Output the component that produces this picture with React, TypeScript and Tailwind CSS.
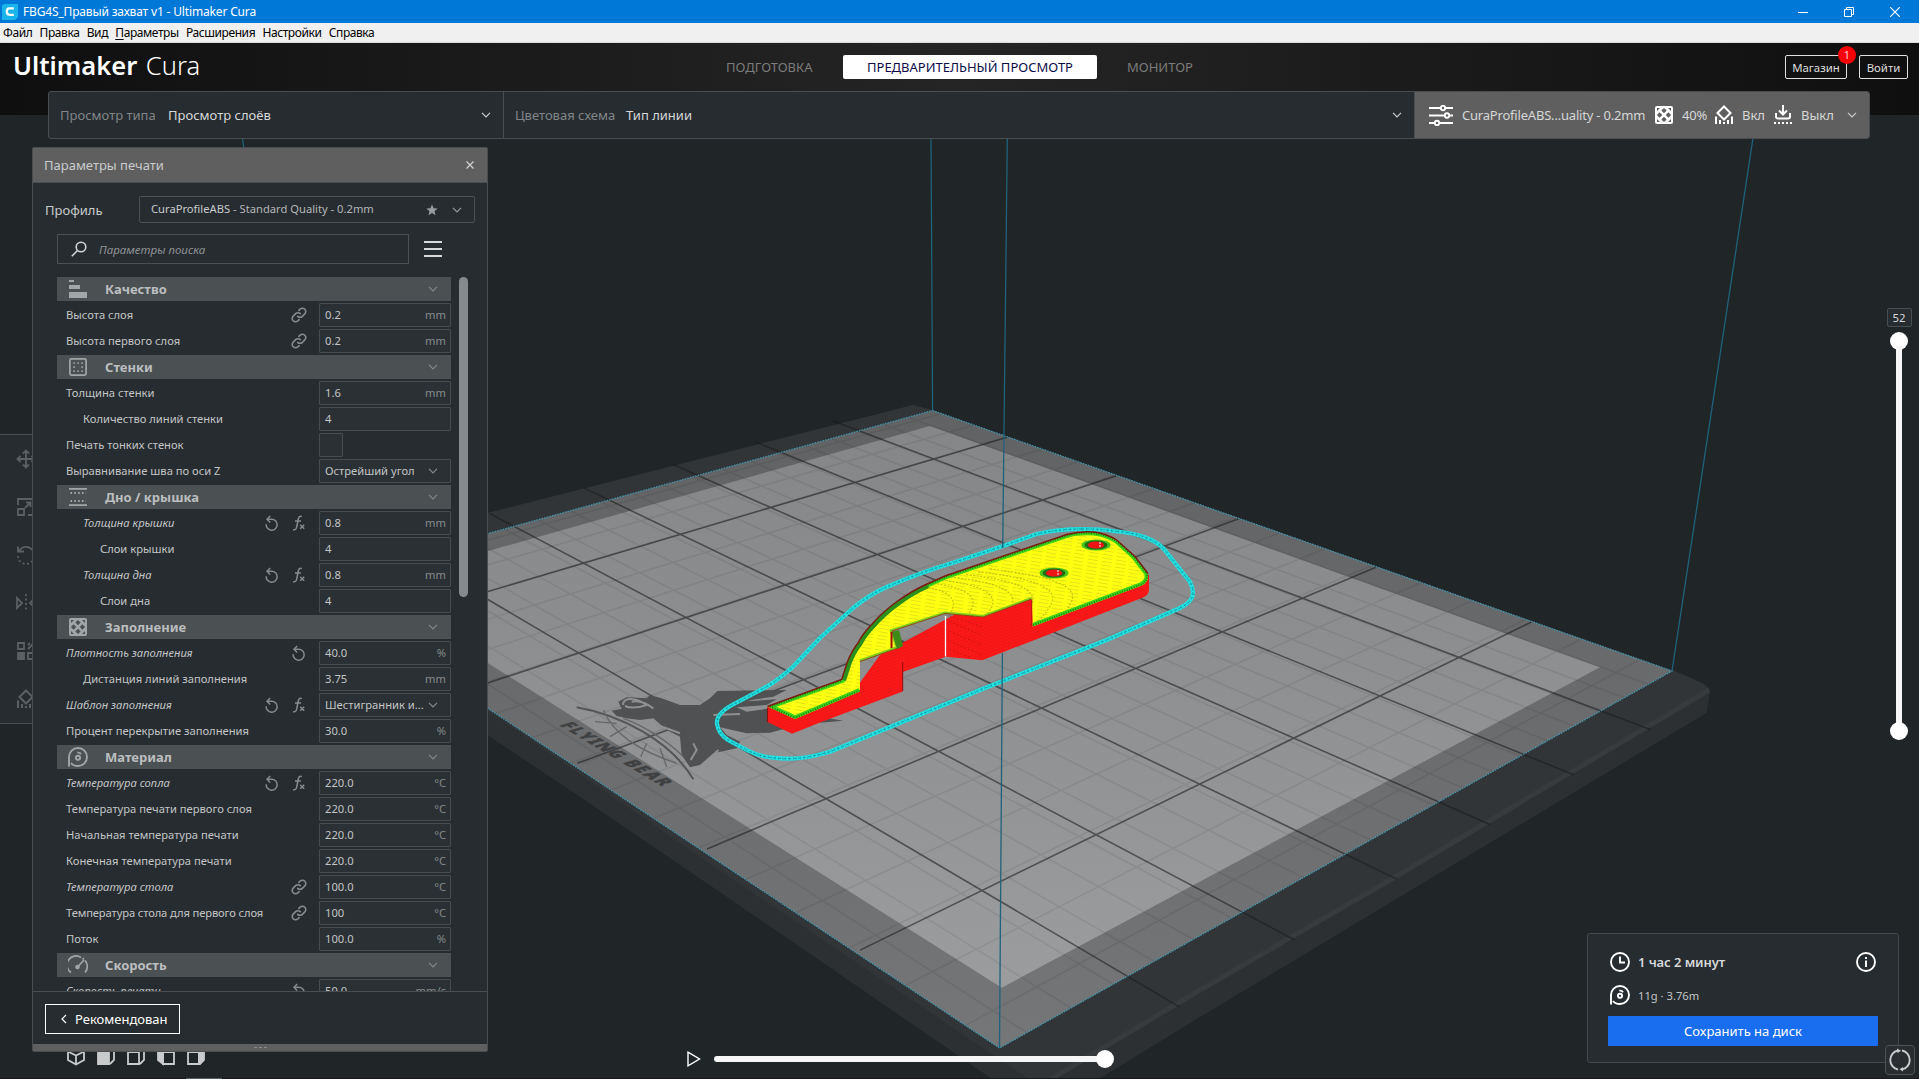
import React from "react";

type P = [number, number];

/* ---------- build plate projection ---------- */

const CORNERS: { b: P; r: P; l: P } = {
  b: [932.6, 410.5],
  r: [1672, 671],
  l: [302, 585],
};

function project(u: number, v: number): P {
  const { b, r, l } = CORNERS;
  const g = -0.2797;
  const h = -0.2096;
  const w = 1 + g * u + h * v;
  const ax = r[0] - b[0] + g * r[0];
  const ay = r[1] - b[1] + g * r[1];
  const cx = l[0] - b[0] + h * l[0];
  const cy = l[1] - b[1] + h * l[1];
  return [(ax * u + cx * v + b[0]) / w, (ay * u + cy * v + b[1]) / w];
}

function seg(u1: number, v1: number, u2: number, v2: number) {
  const a = project(u1, v1);
  const c = project(u2, v2);
  return `M${a[0].toFixed(1)} ${a[1].toFixed(1)}L${c[0].toFixed(1)} ${c[1].toFixed(1)}`;
}

const minorLines: string[] = [];
for (let k = -8; k <= 8; k++) minorLines.push(seg(0.492 + k * 0.0595, 0, 0.492 + k * 0.0595, 1));
for (let k = 1; k <= 20; k++) minorLines.push(seg(0, k / 20.6, 1, k / 20.6));

const majorLines: string[] = [];
for (let k = 1; k <= 6; k++) majorLines.push(seg(-0.05, k / 7, 1.047, k / 7));
[0.136, 0.316, 0.496, 0.676, 0.856].forEach((u) => majorLines.push(seg(u, 0, u, 0.995)));

const TOP_FACE =
  "M767.5 706.5L841.7 679.5L847 663C850 655 854 648 858 643C862 635 867 629 873 623C880 615 888 608 897 601.5C906 595 916 589 927 584L945 576L1001.7 556.5L1066.7 534.5C1072 532.5 1077 532 1081.7 532C1088 531.5 1095 532 1100 533C1107 535 1112 537 1116.7 540L1135 556.5L1148 573.5L1148 578C1147 582 1145 584 1141.7 585.5L1032.7 626.5L1031.7 599L983 617L945 613.5L892 631L898 648L860 661.5L860 691.5L795 719Z";
const OUTER_EDGE =
  "M860 691.5L795 719L767.5 706.5L841.7 679.5L847 663C850 655 854 648 858 643C862 635 867 629 873 623C880 615 888 608 897 601.5C906 595 916 589 927 584L945 576L1001.7 556.5L1066.7 534.5C1072 532.5 1077 532 1081.7 532C1088 531.5 1095 532 1100 533C1107 535 1112 537 1116.7 540L1135 556.5L1148 573.5L1148 578C1147 582 1145 584 1141.7 585.5L1032.7 626.5";
const WALL_EDGE = "M860 661.5L898 648L892 631L945 613.5L983 617L1031.7 599";
const BODY =
  "M767.5 706.5L767.5 722L792 733.8L820 722.5L902.7 691.5L902.7 672L945.7 656.7L982.3 660.3L1143 597.5C1147 596 1149 593 1149 589L1149 575L1100 545L1000 590L880 655L856 688L800 703Z";
const SKIRT =
  "M1081.7 529C1065 529 1050 531 1036.7 534L1001.7 546.5L953 562.7C925 571 905 579 886.7 587C875 592 863 600 853 608L820 638L793 666.7C785 674 776 681 766.7 686.7L732 705C723 710 716 716 717 724C718 731 722 736 728 740L746.7 750C756 755 765 757 773 757.7C783 759 792 759 800 758C811 757 822 754 830 751.7L980 690L1106.7 640L1180 608C1190 603 1193 598 1193 593C1193 589 1192 586 1190 582L1163 548C1158 543 1152 540 1146.7 538C1135 533 1125 532 1113 531C1102 529 1092 529 1081.7 529Z";

function Scene() {
  return (
    <svg className="absolute inset-0" width="1919" height="1036" viewBox="0 43 1919 1036">
      <defs>
        <linearGradient id="plate" x1="0" y1="400" x2="0" y2="1050" gradientUnits="userSpaceOnUse">
          <stop offset="0" stopColor="#848586" />
          <stop offset="0.45" stopColor="#8f9091" />
          <stop offset="1" stopColor="#9e9fa0" />
        </linearGradient>
        <linearGradient id="rim" x1="0" y1="400" x2="0" y2="1050" gradientUnits="userSpaceOnUse">
          <stop offset="0" stopColor="#616263" />
          <stop offset="1" stopColor="#757677" />
        </linearGradient>
        <pattern id="skin" width="14" height="3.6" patternUnits="userSpaceOnUse" patternTransform="rotate(9)">
          <rect width="14" height="3.6" fill="#ffff12" />
          <rect y="0" width="10" height="0.7" fill="#dcd814" />
        </pattern>
        <pattern id="wall" width="4" height="3" patternUnits="userSpaceOnUse" patternTransform="rotate(-20)">
          <rect width="4" height="3" fill="#fa1818" />
          <rect width="4" height="0.6" fill="#ee1414" />
        </pattern>
        <clipPath id="topClip">
          <path d={TOP_FACE} />
        </clipPath>
      </defs>

      {/* platform body */}
      <path d="M302 573L913 405L932 410L1672 670L1701.5 682.7C1707 685 1710 687 1710 692L1706.5 713L1428 880L1200 1017L1099 1079L992 1079L790 940L570 790L240 570Z" fill="#2d3032" />
      <path d="M302 560L913 405L932 410L1672 670L1701.5 682.7L1709 690L1390 880L1200 990L1051 1079L1029 1079L700 857L487 710Z" fill="#323537" />
      <path d="M1709 690L1390 880L1200 990L1051 1079" fill="none" stroke="#383b3d" strokeWidth="5" />

      {/* printable plate */}
      <path d="M932.6 410.5L1672 671L999.5 1048L302 585Z" fill="url(#rim)" />
      <path d="M930 426L1600 667.3L1001.8 987.7L365.5 585.7Z" fill="url(#plate)" />
      <path d={minorLines.join("")} stroke="#000" strokeOpacity="0.07" strokeWidth="1.6" fill="none" />
      <path d={majorLines.join("")} stroke="#1a1c1e" strokeOpacity="0.58" strokeWidth="1.6" fill="none" />

      {/* printer maker's mascot */}
      <g transform="translate(480 390) scale(0.33333)">
        <path d="M395 962L425 956L415 935L440 922L500 925L510 915L545 925L600 945L660 945L690 925L712 903L920 900L880 920L780 935L890 928L860 945L770 952L800 965L870 955L1090 992L1000 1000L900 1020L870 1028L800 1030L720 1012L740 1035L780 1055L770 1075L700 1090L660 1125L630 1132L605 1095L600 1040L560 1020L520 985L480 990L440 985L410 978Z" fill="#505152" />
        <path d="M430 945C425 925 460 918 500 945C470 955 450 955 435 948M455 935C480 930 500 940 520 955M640 1060L650 1080L632 1110M700 975L780 972M700 1095L715 1080M530 1005C560 1015 590 1025 600 1030" fill="none" stroke="#8f9091" strokeWidth="6" />
        <path d="M290 952C420 975 570 1050 640 1168" fill="none" stroke="#555657" strokeWidth="6" />
        <path d="M345 995L410 1000M370 960C400 1030 470 1080 590 1120M440 1010L390 1040M500 1060L482 1100M540 1075L560 1130M310 1120L355 1103M430 985C500 1010 570 1060 610 1100" fill="none" stroke="#666768" strokeWidth="4" />
      </g>
      <text transform="matrix(0.9 0.535 -1.15 0.35 559 725)" fontFamily="'Noto Sans', sans-serif" fontWeight="800" fontSize="15" fill="#3f4041" stroke="#3f4041" strokeWidth="0.6" textLength="114">
        FLYING BEAR
      </text>

      {/* build volume */}
      <path d="M932.6 410.5L1672 671L999.5 1048L302 585Z" fill="none" stroke="#3f98b3" strokeWidth="1.3" strokeDasharray="1.5 1.2" />
      <path d="M931 138L932.6 410.5M1753 138L1672 671M242.5 138L302 585" stroke="#1f627c" strokeWidth="1.3" fill="none" />

      {/* sliced model */}
      <path d={SKIRT} fill="none" stroke="#23e3e4" strokeWidth="4.2" />
      <path d={SKIRT} fill="none" stroke="#128f93" strokeWidth="0.8" strokeDasharray="3 2" />
      <path d={SKIRT} fill="none" stroke="#176f72" strokeOpacity="0.45" strokeWidth="4.2" strokeDasharray="0.5 3.1" />
      <path d={BODY} fill="url(#wall)" />
      <path d={TOP_FACE} fill="url(#skin)" />
      <g clipPath="url(#topClip)">
        {[30, 50, 70, 90, 110, 130, 150].map((r) => (
          <path
            key={r}
            d={`M${900 + r * 0.6} ${590 - r * 0.14}Q${930 + r} ${594 - r * 0.1} ${922 + r} ${612 - r * 0.08}T${880 + r} ${640}`}
            fill="none"
            stroke="#c9c414"
            strokeWidth="1.3"
            strokeDasharray="2 1.5"
          />
        ))}
        <path d={OUTER_EDGE} fill="none" stroke="#3cd41a" strokeWidth="7" />
        <path d={OUTER_EDGE} fill="none" stroke="#1b7a12" strokeWidth="4" strokeDasharray="1 1.5" />
        <path d="M841.7 679.5L847 663C850 655 854 648 858 643C862 635 867 629 873 623C880 615 888 608 897 601.5C906 595 916 589 927 584" fill="none" stroke="#2a8f1c" strokeWidth="9" />
        <path d={WALL_EDGE} fill="none" stroke="#7ccf1c" strokeWidth="4" />
      </g>
      <path d="M767.5 706.5L841.7 679.5L847 663C850 655 854 648 858 643C862 635 867 629 873 623C880 615 888 608 897 601.5C906 595 916 589 927 584L945 576L1066.7 534.5C1077 532 1090 531 1100 533C1107 535 1112 537 1116.7 540L1135 556.5L1148 573.5" fill="none" stroke="#7c1a10" strokeWidth="1.4" />
      <path d={WALL_EDGE} fill="none" stroke="#8a3a10" strokeWidth="0.9" />
      <path d="M892 632L899 630L903 646L897 649Z" fill="#3c8a18" />
      <path d="M891.5 632V648" stroke="#a01010" strokeWidth="2" />
      <path d="M902.7 662L902.7 691M767.5 708V722" stroke="#8a0f0f" strokeWidth="1" />
      <path d="M1031.7 600V626" stroke="#c01212" strokeWidth="1" />
      <path d="M946 620L982 635M946 630L982 645M946 640L982 655M950 616L982 627M946 648L970 657" stroke="#b01010" strokeWidth="1" strokeDasharray="1 3" />
      <path d="M945.5 616V656.5" stroke="#fff" strokeWidth="1.3" />
      {[
        [1096, 545],
        [1054, 573],
      ].map(([x, y]) => (
        <g key={x}>
          <ellipse cx={x} cy={y} rx="14.5" ry="5.6" fill="#49c51c" />
          <ellipse cx={x} cy={y} rx="11.5" ry="4.6" fill="#1f6d14" />
          <ellipse cx={x} cy={y} rx="8.2" ry="3.6" fill="#ee1515" />
          <path d={`M${x + 4} ${y - 3}V${y + 3}`} stroke="#fff" strokeDasharray="2 1" />
        </g>
      ))}
      <path d="M1007.3 138L1002.7 548" stroke="#1f627c" strokeWidth="1.3" />
      <path d="M1002.4 653L999.5 1048" stroke="#1f627c" strokeWidth="1.3" />
    </svg>
  );
}

/* ---------- icons ---------- */

type IconProps = { className?: string };

function Chevron({ className = "" }: IconProps) {
  return (
    <svg className={className} width="10" height="6" viewBox="0 0 10 6" fill="none" stroke="currentColor" strokeWidth="1.2">
      <path d="M1 0.8L5 4.8L9 0.8" />
    </svg>
  );
}

function LinkIcon() {
  return (
    <svg width="16" height="16" viewBox="0 0 24 24" fill="none" stroke="currentColor" strokeWidth="2.4" strokeLinecap="round">
      <path d="M10 14a5 5 0 0 0 7.1 0l3.6-3.6a5 5 0 0 0-7.1-7.1L11.800 5" />
      <path d="M14 10a5 5 0 0 0-7.100 0l-3.600 3.600a5 5 0 0 0 7.100 7.100L12.200 19" />
    </svg>
  );
}

function ResetIcon() {
  return (
    <svg width="14" height="16" viewBox="0 0 14 16" fill="none" stroke="currentColor" strokeWidth="1.5">
      <path d="M1.200 9.200A5.500 5.500 0 1 0 6.500 4.200H2.300" />
      <path d="M5.200 0.900L2 4.200L5.200 7.500" />
    </svg>
  );
}

function FxIcon() {
  return (
    <svg width="14" height="16" viewBox="0 0 14 16" fill="none" stroke="currentColor" strokeWidth="1.5">
      <path d="M9.800 1.600C7.800 0.600 6.700 1.800 6.300 4L4.800 11.500C4.400 14 3.200 15.300 1 14.600M3 6H9" />
      <path d="M8.200 9.800L12.200 13.800M12.200 9.800L8.200 13.800" />
    </svg>
  );
}

function InfillIcon({ className = "", hole = "#4b5053" }: IconProps & { hole?: string }) {
  return (
    <svg className={className} width="18" height="18" viewBox="0 0 18 18">
      <rect width="18" height="18" rx="2" fill="currentColor" />
      <g fill={hole}>
        {[
          [9, 4.6],
          [4.6, 9],
          [13.4, 9],
          [9, 13.4],
        ].map(([x, y]) => (
          <path key={`${x}-${y}`} d={`M${x} ${y - 2.7}L${x + 2.7} ${y}L${x} ${y + 2.7}L${x - 2.7} ${y}Z`} />
        ))}
        <path d="M2 2H5L2 5ZM16 2V5L13 2ZM2 16V13L5 16ZM16 16H13L16 13Z" />
      </g>
    </svg>
  );
}

function SpoolIcon({ className = "" }: IconProps) {
  return (
    <svg className={className} width="20" height="20" viewBox="0 0 20 20" fill="none" stroke="currentColor" strokeWidth="1.9">
      <path d="M1 19.500V10A9 9 0 1 1 10 19C7 19 4.500 18 3 16" />
      <circle cx="10" cy="10.800" r="2.100" />
      <path d="M9.300 5.700C11 5.300 12.300 6 13 7.300" strokeWidth="1.800" />
    </svg>
  );
}

function SupportIcon({ className = "" }: IconProps) {
  return (
    <svg className={className} width="18" height="20" viewBox="0 0 18 20" fill="none" stroke="currentColor" strokeWidth="2">
      <path d="M9 1.500L15.500 8L9 14.500L2.500 8Z" />
      <path d="M1 11.500V19M5 15V19M9 17V19M13 15V19M17 11.500V19" />
    </svg>
  );
}

function AdhesionIcon() {
  return (
    <svg width="18" height="20" viewBox="0 0 18 20" fill="none" stroke="currentColor" strokeWidth="2">
      <path d="M9 0V9M5 5.500L9 9.500L13 5.500" />
      <path d="M2 8V11.500Q2 13.500 4 13.500H14Q16 13.500 16 11.500V8" />
      <path d="M0 18H18" strokeDasharray="2 2" />
    </svg>
  );
}

function SlidersIcon() {
  return (
    <svg width="24" height="21" viewBox="0 0 24 21" fill="none" stroke="currentColor" strokeWidth="1.9">
      <path d="M0 3H11.500M16.500 3H24M0 10.500H15.500M20.500 10.500H24M0 18H5.500M10.500 18H24" />
      <circle cx="14" cy="3" r="2.200" />
      <circle cx="18" cy="10.500" r="2.200" />
      <circle cx="8" cy="18" r="2.200" />
    </svg>
  );
}

function CategoryIcon({ kind }: { kind: string }) {
  switch (kind) {
    case "quality":
      return (
        <svg width="20" height="20" viewBox="0 0 20 20" fill="currentColor">
          <path d="M1 1H6V3H1ZM1 6H12V10H1ZM1 13H19V19H1Z" />
        </svg>
      );
    case "walls":
      return (
        <svg width="20" height="20" viewBox="0 0 20 20" fill="none" stroke="currentColor" strokeWidth="1.7">
          <rect x="1.900" y="1.900" width="16.200" height="16.200" rx="1.500" />
          <g fill="currentColor" stroke="none">
            {[5.3, 9.3, 13.3].map((x) =>
              [5.3, 9.3, 13.3].map((y) => (x === 9.3 && y === 9.3 ? null : <rect key={`${x}${y}`} x={x} y={y} width="1.600" height="1.600" />))
            )}
          </g>
        </svg>
      );
    case "topbottom":
      return (
        <svg width="20" height="20" viewBox="0 0 20 20" fill="none" stroke="currentColor" strokeWidth="1.8">
          <path d="M1 1.900H19M1 18.100H19" />
          <path d="M2.500 6H18M2.500 14H18" strokeDasharray="1.600 2.200" />
        </svg>
      );
    case "infill":
      return <InfillIcon className="mr-px ml-px" />;
    case "material":
      return <SpoolIcon />;
    default:
      return (
        <svg width="20" height="20" viewBox="0 0 20 20" fill="none" stroke="currentColor" strokeWidth="1.7">
          <path d="M3 17.500A9 9 0 0 1 13 2.500M17 5.500A9 9 0 0 1 17 17.500M14.500 3.200L16 4.300" />
          <path d="M10 11.500L16 5" />
          <circle cx="9.500" cy="12" r="1.400" fill="currentColor" />
        </svg>
      );
  }
}

/* ---------- settings list ---------- */

type Item =
  | { t: "cat"; icon: string; label: string }
  | {
      t: "row";
      label: string;
      indent?: 0 | 1 | 2;
      changed?: boolean;
      marks?: string;
      value?: string;
      unit?: string;
      control?: "check" | "select";
    };

const ITEMS: Item[] = [
  { t: "cat", icon: "quality", label: "Качество" },
  { t: "row", label: "Высота слоя", marks: "l", value: "0.2", unit: "mm" },
  { t: "row", label: "Высота первого слоя", marks: "l", value: "0.2", unit: "mm" },
  { t: "cat", icon: "walls", label: "Стенки" },
  { t: "row", label: "Толщина стенки", value: "1.6", unit: "mm" },
  { t: "row", label: "Количество линий стенки", indent: 1, value: "4" },
  { t: "row", label: "Печать тонких стенок", control: "check" },
  { t: "row", label: "Выравнивание шва по оси Z", control: "select", value: "Острейший угол" },
  { t: "cat", icon: "topbottom", label: "Дно / крышка" },
  { t: "row", label: "Толщина крышки", indent: 1, changed: true, marks: "rf", value: "0.8", unit: "mm" },
  { t: "row", label: "Слои крышки", indent: 2, value: "4" },
  { t: "row", label: "Толщина дна", indent: 1, changed: true, marks: "rf", value: "0.8", unit: "mm" },
  { t: "row", label: "Слои дна", indent: 2, value: "4" },
  { t: "cat", icon: "infill", label: "Заполнение" },
  { t: "row", label: "Плотность заполнения", changed: true, marks: "r", value: "40.0", unit: "%" },
  { t: "row", label: "Дистанция линий заполнения", indent: 1, value: "3.75", unit: "mm" },
  { t: "row", label: "Шаблон заполнения", changed: true, marks: "rf", control: "select", value: "Шестигранник и..." },
  { t: "row", label: "Процент перекрытие заполнения", value: "30.0", unit: "%" },
  { t: "cat", icon: "material", label: "Материал" },
  { t: "row", label: "Температура сопла", changed: true, marks: "rf", value: "220.0", unit: "°C" },
  { t: "row", label: "Температура печати первого слоя", value: "220.0", unit: "°C" },
  { t: "row", label: "Начальная температура печати", value: "220.0", unit: "°C" },
  { t: "row", label: "Конечная температура печати", value: "220.0", unit: "°C" },
  { t: "row", label: "Температура стола", changed: true, marks: "l", value: "100.0", unit: "°C" },
  { t: "row", label: "Температура стола для первого слоя", marks: "l", value: "100", unit: "°C" },
  { t: "row", label: "Поток", value: "100.0", unit: "%" },
  { t: "cat", icon: "speed", label: "Скорость" },
  { t: "row", label: "Скорость печати", changed: true, marks: "r", value: "50.0", unit: "mm/s" },
];

const INDENT = ["pl-[9px]", "pl-[26px]", "pl-[43px]"];

function SettingItem({ item }: { item: Item }) {
  if (item.t === "cat") {
    return (
      <div className="flex h-6 shrink-0 items-center bg-[#4b5053] pl-[11px] pr-[13px] text-[#a3a6a8]">
        <CategoryIcon kind={item.icon} />
        <span className="ml-[17px] flex-1 text-[13px] leading-6 font-bold text-[#bcbebf]">{item.label}</span>
        <Chevron className="text-[#84888a]" />
      </div>
    );
  }
  const field = "flex h-6 w-[132px] items-center rounded-[1px] border border-[#484c4f] bg-[#2b3034] pr-1 pl-[5px]";
  return (
    <div className={`flex h-6 shrink-0 items-center text-[11.2px] text-[#c3c5c6] ${INDENT[item.indent ?? 0]}`}>
      <span className={`flex-1 whitespace-nowrap ${item.changed ? "italic" : ""} ${item.label.length > 32 ? "tracking-[-0.12px]" : ""}`}>{item.label}</span>
      <div className="mr-[12px] flex gap-[11px] text-[#878b8d]">
        {(item.marks ?? "").split("").map((m) => (
          <span key={m} className="flex w-4 justify-center">
            {m === "l" ? <LinkIcon /> : m === "r" ? <ResetIcon /> : <FxIcon />}
          </span>
        ))}
      </div>
      {item.control === "check" ? (
        <div className="mr-[108px] size-6 rounded-[1px] border border-[#484c4f] bg-[#2b3034]" />
      ) : item.control === "select" ? (
        <div className={field}>
          <span className="flex-1 pt-px whitespace-nowrap">{item.value}</span>
          <Chevron className="mr-2 text-[#878b8d]" />
        </div>
      ) : (
        <div className={field}>
          <span className="flex-1">{item.value}</span>
          <span className="text-[#878b8d]">{item.unit}</span>
        </div>
      )}
    </div>
  );
}

function SettingsPanel() {
  return (
    <section className="absolute top-[104px] left-8 flex h-[905px] w-[456px] flex-col rounded-[2px] border border-[#4a4e50] bg-[#272c30] text-[#c9cbcc]">
      <header className="flex h-[35px] shrink-0 items-center justify-between border-b border-[#4a4e50] bg-[#5f5f5f] pr-[13px] pl-[11px]">
        <span className="pt-px text-[13px]">Параметры печати</span>
        <svg width="8" height="8" viewBox="0 0 8 8" stroke="#d5d5d5" strokeWidth="1.1">
          <path d="M0.500 0.500L7.500 7.500M7.500 0.500L0.500 7.500" />
        </svg>
      </header>
      <div className="mt-[13px] flex h-[27px] shrink-0 items-center pr-3 pl-3">
        <span className="w-[94px] pt-0.5 text-[13px]">Профиль</span>
        <div className="flex h-[27px] flex-1 items-center rounded-[2px] border border-[#4c5053] pr-[12px] pl-[11px] text-[11.2px]">
          <span>CuraProfileABS</span>
          <span className="flex-1 whitespace-pre text-[#b4b6b7]"> - Standard Quality - 0.2mm</span>
          <svg className="mr-[14px]" width="12" height="12" viewBox="0 0 24 24" fill="#989b9d">
            <path d="M12 1l3.200 7.400 8 .7-6.100 5.300 1.900 7.900L12 18.100l-7 4.200 1.900-7.900L.8 9.100l8-.7z" />
          </svg>
          <Chevron className="text-[#989b9d]" />
        </div>
      </div>
      <div className="mt-[11px] flex h-[30px] shrink-0 items-center pl-6">
        <div className="flex h-[30px] w-[352px] items-center border border-[#4c5053] pl-[13px]">
          <svg width="16" height="16" viewBox="0 0 16 16" fill="none" stroke="#d2d4d5" strokeWidth="1.6">
            <circle cx="10" cy="6" r="4.800" />
            <path d="M6.500 9.500L0.800 15.200" />
          </svg>
          <span className="ml-[12px] pt-px text-[11.5px] text-[#8f9294] italic">Параметры поиска</span>
        </div>
        <div className="ml-[15px] flex flex-col gap-[5px]">
          <div className="h-0.5 w-[18px] bg-[#d8d9da]" />
          <div className="h-0.5 w-[18px] bg-[#d8d9da]" />
          <div className="h-0.5 w-[18px] bg-[#d8d9da]" />
        </div>
      </div>
      <div className="mt-[13px] flex h-[714px] shrink-0 overflow-hidden pl-6">
        <div className="flex w-[394px] flex-col gap-0.5">
          {ITEMS.map((it, i) => (
            <SettingItem key={i} item={it} />
          ))}
        </div>
        <div className="ml-2 h-80 w-[9px] rounded-full bg-[#868a8c]" />
      </div>
      <footer className="flex flex-1 items-center border-t border-[#4a4e50] pt-0.5 pl-3">
        <button className="flex h-[30px] w-[135px] items-center border border-white pl-[15px] text-[13px] text-white">
          <svg width="6" height="10" viewBox="0 0 6 10" fill="none" stroke="currentColor" strokeWidth="1.2">
            <path d="M5 1L1 5L5 9" />
          </svg>
          <span className="ml-[8px] pt-px">Рекомендован</span>
        </button>
      </footer>
      <div className="flex h-[7px] shrink-0 items-center justify-center gap-[2px] bg-[#5f5f5f]">
        <i className="h-px w-[3px] bg-[#8b8b8b]" />
        <i className="h-px w-[3px] bg-[#8b8b8b]" />
        <i className="h-px w-[3px] bg-[#8b8b8b]" />
      </div>
    </section>
  );
}

/* ---------- frame ---------- */

function TitleBar() {
  return (
    <div className="flex h-[23px] items-center bg-[#0078d7] pr-[19px] pl-0.5 text-white">
      <svg width="16" height="16" viewBox="0 0 16 16">
        <path d="M0 3Q0 0 3 0H16V13L13 16H0Z" fill="#19b5ea" />
        <path d="M11.800 4.300H7.500Q4.800 4.300 4.800 7.500T7.500 10.800H11.800" fill="none" stroke="#fff" strokeWidth="2.300" />
      </svg>
      <span className="ml-[5px] flex-1 pt-px text-[12px] tracking-[-0.16px]">FBG4S_Правый захват v1 - Ultimaker Cura</span>
      <div className="flex items-center gap-[36px]">
        <svg width="10" height="10" viewBox="0 0 10 10" stroke="#fff">
          <path d="M0 5.500H10" />
        </svg>
        <svg width="10" height="10" viewBox="0 0 10 10" fill="none" stroke="#fff">
          <path d="M0.500 2.500H7.500V9.500H0.500ZM2.500 2.500V0.500H9.500V7.500H7.500" />
        </svg>
        <svg width="10" height="10" viewBox="0 0 10 10" stroke="#fff" strokeWidth="1.1">
          <path d="M0 0L10 10M10 0L0 10" />
        </svg>
      </div>
    </div>
  );
}

const MENU = ["Файл", "Правка", "Вид", "Параметры", "Расширения", "Настройки", "Справка"];

function MenuBar() {
  return (
    <div className="flex h-5 items-center gap-[7.3px] border-b border-[#dcdcdc] bg-[#f0f0f0] pl-[3px] text-[12px] tracking-[-0.42px] text-black">
      {MENU.map((m) => (
        <span key={m}>
          {m === "Параметры" ? (
            <>
              <u className="underline-offset-2">П</u>араметры
            </>
          ) : (
            m
          )}
        </span>
      ))}
    </div>
  );
}

function Header() {
  return (
    <header className="absolute inset-x-0 top-0 flex h-[72px] items-start bg-[linear-gradient(90deg,#0f0f0f_0%,#252525_50%,#0f0f0f_100%)]">
      <div className="w-[709px] pl-[13px] text-[25.5px] leading-[44px] whitespace-nowrap text-white">
        <span className="font-semibold">Ultimaker</span> <span className="ml-0.5 font-light">Cura</span>
      </div>
      <nav className="mt-3 flex h-6 flex-1 items-center text-[13px] text-[#7b7b7b]">
        <span className="w-[134px] pt-px pl-[17px]">ПОДГОТОВКА</span>
        <span className="flex h-6 w-[254px] items-center justify-center rounded-[2px] bg-white pt-px whitespace-nowrap text-[#0c0c4a]">ПРЕДВАРИТЕЛЬНЫЙ ПРОСМОТР</span>
        <span className="ml-[30px] pt-px">МОНИТОР</span>
      </nav>
      <div className="mt-3 mr-[11px] flex gap-3 text-[11.4px] text-[#dedede]">
        <div className="relative flex h-6 w-[62px] items-center justify-center rounded-[2px] border border-[#e0e0e0] pt-0.5">
          Магазин
          <span className="absolute -top-[10px] -right-[10px] flex size-[18px] items-center justify-center rounded-full bg-[#fb0007] pt-px text-[11px] text-white/80">1</span>
        </div>
        <div className="flex h-6 w-[49px] items-center justify-center rounded-[2px] border border-[#e0e0e0] pt-0.5">Войти</div>
      </div>
    </header>
  );
}

function StageMenu() {
  return (
    <div className="absolute top-12 left-12 flex h-12 w-[1822px] overflow-hidden rounded-[3px] border border-[#4a4e50] bg-[#272c30] text-[13px]">
      <div className="flex w-[455px] items-center border-r border-[#4a4e50] pr-[12px] pl-[11px]">
        <span className="w-[108px] pt-0.5 text-[#828587]">Просмотр типа</span>
        <span className="flex-1 pt-0.5 text-[#d6d8d9]">Просмотр слоёв</span>
        <Chevron className="text-[#c9cbcc]" />
      </div>
      <div className="flex flex-1 items-center pr-[12px] pl-[11px]">
        <span className="w-[111px] pt-0.5 whitespace-nowrap text-[#828587]">Цветовая схема</span>
        <span className="flex-1 pt-0.5 text-[#d6d8d9]">Тип линии</span>
        <Chevron className="text-[#c9cbcc]" />
      </div>
      <div className="flex w-[455px] items-center border-l border-[#4a4e50] bg-[#5f5f5f] pl-[14px] whitespace-nowrap text-[#d6d7d7]">
        <span className="w-[33px] text-white">
          <SlidersIcon />
        </span>
        <span className="w-[193px] pt-0.5 tracking-[-0.2px]">CuraProfileABS...uality - 0.2mm</span>
        <span className="w-[27px] text-white">
          <InfillIcon hole="#5f5f5f" />
        </span>
        <span className="w-[33px] pt-0.5 tracking-[-0.2px]">40%</span>
        <span className="w-[27px] text-white">
          <SupportIcon />
        </span>
        <span className="w-[32px] pt-0.5">Вкл</span>
        <span className="w-[27px] text-white">
          <AdhesionIcon />
        </span>
        <span className="w-[46px] pt-0.5">Выкл</span>
        <Chevron className="text-[#c9cbcc]" />
      </div>
    </div>
  );
}

function ToolBar() {
  const s = { width: 20, height: 20, viewBox: "0 0 20 20", fill: "none", stroke: "currentColor", strokeWidth: 1.8 };
  return (
    <div className="absolute top-[391px] left-[-1px] flex h-[290px] w-[50px] flex-col items-center gap-[28px] border border-[#4a4e50] bg-[#272c30] pt-[14px] pl-[3px] text-[#5b6063]">
      <svg {...s}>
        <path d="M10 1.500V18.500M1.500 10H18.500M7 4.500L10 1.500L13 4.500M7 15.500L10 18.500L13 15.500M4.500 7L1.500 10L4.500 13M15.500 7L18.500 10L15.500 13" />
      </svg>
      <svg {...s}>
        <path d="M2 8V2H18V18H12M2 12H8V18H2ZM9 11L14.500 5.500M10 5.500H14.500V10" />
      </svg>
      <svg {...s}>
        <path d="M2 1.500V6.500H8M3 6A8 8 0 0 1 18 10" />
        <path d="M2 11A8 8 0 0 0 18 11" strokeDasharray="2 2.500" />
      </svg>
      <svg {...s}>
        <path d="M1 5V15L6 10ZM19 5V15L14 10Z" />
        <path d="M10 1V19" strokeDasharray="2 2.500" />
      </svg>
      <svg {...s}>
        <path d="M2 2H8V8H2ZM12 12H18V18H12ZM12 8L18 2M12 4L14 2" />
        <path d="M2 12H8V18H2Z" fill="currentColor" />
      </svg>
      <SupportIcon />
    </div>
  );
}

function ViewButtons() {
  const s = { width: 20, height: 20, viewBox: "0 0 20 20", fill: "none", stroke: "#c9cbcc", strokeWidth: 1.8 };
  return (
    <div className="absolute top-[1003px] left-[66px] flex gap-[10px]">
      <svg {...s}>
        <path d="M10 1L18 5V14L10 18.500L2 14V5ZM2 5.500L10 9.500L18 5.500M10 9.500V18" />
      </svg>
      <svg {...s}>
        <path d="M2 6H13V18H2Z" fill="#c9cbcc" />
        <path d="M2 6L6 2H18V14L14 18" />
      </svg>
      <svg {...s}>
        <path d="M2 6H13V18H2ZM2 6L6 2H18V14L14 18" />
      </svg>
      <svg {...s}>
        <path d="M7 6H18V18H7Z" />
        <path d="M7 6L2 2V14L7 18Z" fill="#c9cbcc" />
      </svg>
      <svg {...s}>
        <path d="M2 6H13V18H2Z" />
        <path d="M13 6L18 2V14L14 18H13Z" fill="#c9cbcc" />
      </svg>
    </div>
  );
}

function LayerSlider() {
  return (
    <div className="absolute top-[265px] left-[1886px] flex w-[26px] flex-col items-center">
      <div className="flex h-[19px] w-[25px] items-center justify-center rounded-[2px] border border-[#4a4e50] bg-[#272c30] text-[11.4px] text-[#d6d8d9]">52</div>
      <div className="mt-[5px] size-[18px] rounded-full bg-white" />
      <div className="-my-1 h-[380px] w-[6px] bg-[#f6f6f6]" />
      <div className="size-[18px] rounded-full bg-white" />
    </div>
  );
}

function PathSlider() {
  return (
    <div className="absolute top-[1007px] left-[687px] flex h-[18px] items-center">
      <svg width="14" height="16" viewBox="0 0 14 16" fill="none" stroke="#fff" strokeWidth="1.4">
        <path d="M1 1.200L12.500 8L1 14.800Z" />
      </svg>
      <div className="ml-[13px] h-[6px] w-[384px] rounded-l-full bg-[#f6f6f6]" />
      <div className="-ml-[2px] size-[18px] rounded-full bg-white" />
    </div>
  );
}

function ActionPanel() {
  return (
    <section className="absolute top-[890px] left-[1587px] flex h-[130px] w-[312px] flex-col rounded-[3px] border border-[#45494c] bg-[#272c30] px-5 text-[#d6d8d9]">
      <div className="mt-[18px] flex h-5 items-center pl-0.5">
        <svg width="20" height="20" viewBox="0 0 20 20" fill="none" stroke="#fff" strokeWidth="1.9">
          <circle cx="10" cy="10" r="9" />
          <path d="M10 4.500V10.500H15" />
        </svg>
        <span className="ml-2 flex-1 pt-0.5 text-[13px] font-semibold tracking-[-0.08px]">1 час 2 минут</span>
        <svg className="mr-0.5" width="20" height="20" viewBox="0 0 20 20" fill="none" stroke="#fff" strokeWidth="1.9">
          <circle cx="10" cy="10" r="9" />
          <path d="M10 8.500V15M10 5V7" />
        </svg>
      </div>
      <div className="mt-[13px] flex h-5 items-center pl-0.5">
        <SpoolIcon className="text-white" />
        <span className="ml-2 pt-0.5 text-[11.2px] text-[#c3c5c6]">11g · 3.76m</span>
      </div>
      <button className="mt-[11px] h-[30px] bg-[#196ef0] pt-0.5 text-[13px] text-white">Сохранить на диск</button>
    </section>
  );
}

export default function App() {
  return (
    <div className="flex h-[1079px] w-[1919px] flex-col overflow-hidden bg-[#202527] font-['Noto_Sans',sans-serif]">
      <TitleBar />
      <MenuBar />
      <main className="relative flex-1 overflow-hidden">
        <Scene />
        <Header />
        <StageMenu />
        <ToolBar />
        <ViewButtons />
        <SettingsPanel />
        <LayerSlider />
        <PathSlider />
        <ActionPanel />
        <div className="absolute top-[1002px] left-[1885px] flex size-[30px] items-center justify-center rounded-[4px] border border-[#4f5356] bg-[#2c3033]/80">
          <svg width="22" height="24" viewBox="0 0 22 24" fill="none" stroke="#c9cbcc" strokeWidth="1.9">
            <path d="M9 2.500A9.700 9.700 0 0 0 9 21.500M13 2.500A9.700 9.700 0 0 1 13 21.500" />
            <path d="M8 0.500L12 2.700L8.500 5ZM14 19L10.500 21.300L14 23.500Z" fill="#c9cbcc" stroke="none" />
          </svg>
        </div>
        <div className="absolute bottom-0 left-0 h-px w-full bg-[#17191b]" />
        <div className="absolute bottom-0 left-[186px] h-px w-9 bg-[#5a5d5f]" />
      </main>
    </div>
  );
}
